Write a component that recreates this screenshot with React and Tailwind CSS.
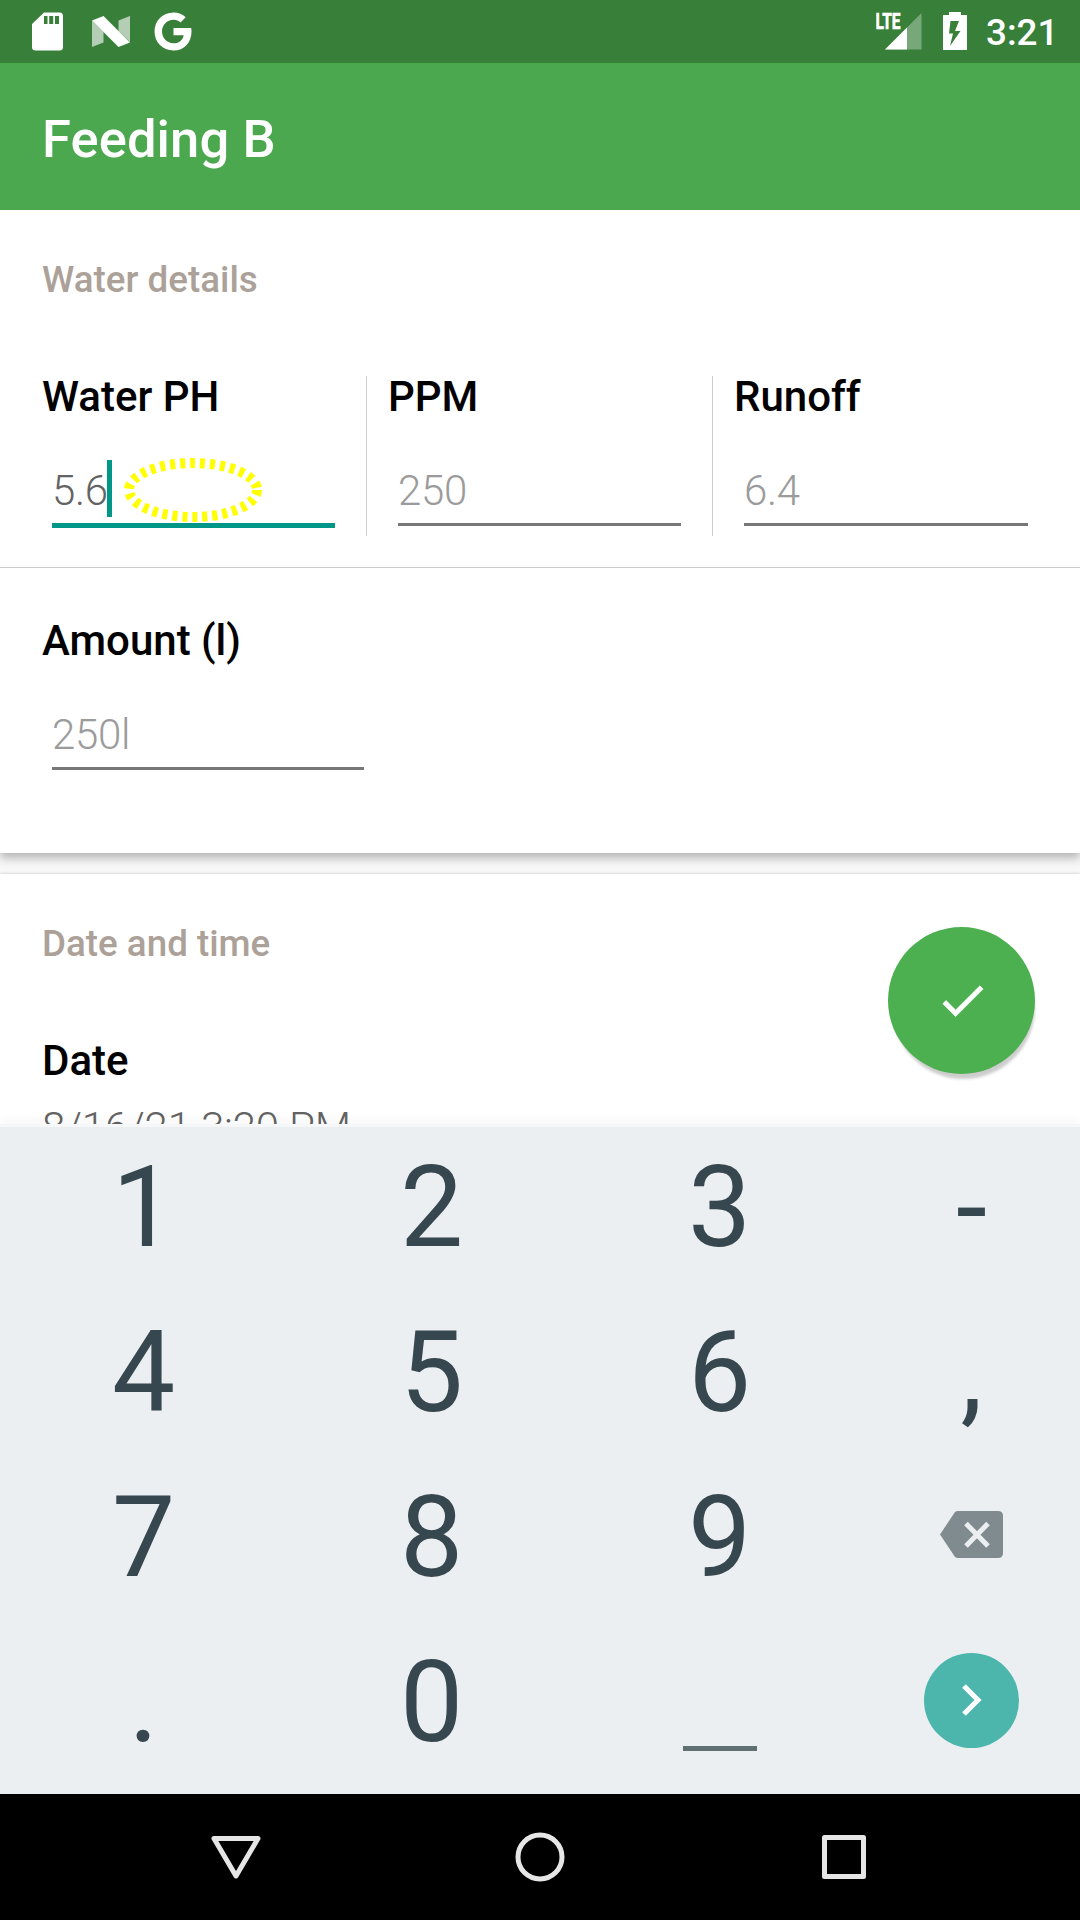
const keyClass = "flex h-[165px] items-center justify-center pb-[3px] text-[112.500px] leading-none text-[#37474f]";
const iconKeyClass = "flex h-[165px] items-center justify-center pb-[9px]";

function StatusBar() {
  return (
    <header className="flex h-[63px] shrink-0 items-center justify-between bg-[#387f3a] text-white">
      <div className="flex h-full items-center">
        <svg className="ml-8 h-[63px] w-[31px]" viewBox="0 0 31 63" fill="currentColor">
          <path fillRule="evenodd" d="M12 12.5H27.5Q31 12.5 31 16V47Q31 50.500 27.500 50.500H3.500Q0 50.500 0 47V24Z M12 16V24H15.500V16Z M17.200 16V24H21.200V16Z M23 16V24H27V16Z" />
        </svg>
        <svg className="ml-[28.500px] h-[63px] w-[38px]" viewBox="0 0 38 63" fill="currentColor">
          <path opacity=".62" d="M0 20.500L11.500 32V42.500L0 47Z M38 16V42L26.500 31V20.500Z" />
          <path d="M0 20.500L11.500 16L38 42.500L26.500 47Z" />
        </svg>
        <svg className="ml-[24.500px] h-[63px] w-[39px]" viewBox="0 0 39 63" fill="currentColor">
          <path d="M19.500 28H37.200Q37.500 30 37.500 31.500C37.500 43 30 50.500 19.500 50.500C8.500 50.500 0.500 42 0.500 31.500C0.500 21 8.500 12.500 19.500 12.500C24.500 12.500 28.500 14.300 31.700 17.300L26.500 22.500C24.800 20.900 22.500 19.800 19.500 19.800C13 19.800 8 25 8 31.500C8 38 13 43.300 19.500 43.300C25.500 43.300 28.800 39.800 29.700 35.200H19.500Z" />
        </svg>
      </div>
      <div className="flex h-full items-center">
        <svg className="h-[63px] w-[46px]" viewBox="0 0 46 63" fill="currentColor">
          <path opacity=".32" d="M9 49.500L45.500 13V49.500Z" />
          <path d="M9 49.500L31 27.500V49.500Z" />
          <text x="-0.500" y="29.300" textLength="25" lengthAdjust="spacingAndGlyphs" stroke="currentColor" strokeWidth=".7" className="text-[22.500px] font-bold">LTE</text>
        </svg>
        <svg className="ml-[21px] h-[63px] w-6" viewBox="0 0 24 63" fill="currentColor">
          <path fillRule="evenodd" d="M6 12H18V15H24V50H0V15H6Z M7.500 21L6 33.500H10L7 46L17.500 31H12L16 21Z" />
        </svg>
        <span className="ml-[19px] mr-[25px] w-[69px] whitespace-nowrap pt-[2px] text-[36.750px] font-medium leading-[63px]">3:21</span>
      </div>
    </header>
  );
}

function Field({ label, hint, width }) {
  return (
    <div>
      <h3 className="text-[42px] font-medium leading-[49px] text-black">{label}</h3>
      <div className={`ml-[10px] mt-[39px] h-[57px] ${width}`}>
        <p className="text-[42px] font-light leading-[62px] tracking-[-0.300px] text-[#9b9b9b]">{hint}</p>
      </div>
      <div className={`ml-[10px] mt-[6px] h-[2.500px] bg-[#777] ${width}`} />
    </div>
  );
}

export default function App() {
  return (
    <div className="relative flex h-[1920px] w-[1080px] flex-col overflow-hidden bg-[#f7f7f7] font-['Roboto',sans-serif]">
      <StatusBar />
      <div className="flex h-[147px] shrink-0 items-center bg-[#4ba84e] pl-[42px] pt-[5px] text-[52.500px] font-medium tracking-[0.100px] text-white">Feeding B</div>

      <main className="h-[914px] shrink-0 overflow-hidden">
        <section className="h-[643px] bg-white shadow-[0_5px_9px_rgba(0,0,0,0.27)]">
          <h2 className="pl-[42px] pt-[48px] text-[36.750px] font-medium leading-[43px] text-[#aca199]">Water details</h2>
          <div className="mt-[75px] flex h-[160px]">
            <div className="w-[366px] pl-[42px]">
              <h3 className="-mt-1 text-[42px] font-medium leading-[49px] text-black">Water PH</h3>
              <div className="ml-[10px] mt-[39px] flex h-[57px] w-[283px] items-start">
                <span className="text-[42px] font-light leading-[62px] tracking-[-0.300px] text-[#636363]">5.6</span>
                <span className="-ml-px h-[57px] w-[5px] bg-[#009688]" />
                <svg className="-mt-[3px] ml-[11px] h-[66px] w-[140px] shrink-0" viewBox="0 0 140 66" fill="none">
                  <ellipse cx="70" cy="33" rx="64" ry="27" stroke="#ff0" strokeWidth="10" strokeDasharray="5 5" />
                </svg>
              </div>
              <div className="ml-[10px] mt-[6px] h-[5px] w-[283px] bg-[#009688]" />
            </div>
            <div className="w-[346px] border-l border-[#ccc] pl-[21px]">
              <div className="-mt-1"><Field label="PPM" hint="250" width="w-[283px]" /></div>
            </div>
            <div className="border-l border-[#ccc] pl-[21px]">
              <div className="-mt-1"><Field label="Runoff" hint="6.4" width="w-[284px]" /></div>
            </div>
          </div>
          <div className="mt-[31px] h-px bg-[#ccc]" />
          <div className="pl-[42px] pt-[48px]"><Field label="Amount (l)" hint="250l" width="w-[312px]" /></div>
        </section>
        <section className="mt-[21px] h-[300px] bg-white pl-[42px] pt-[48px] shadow-[0_0_3px_rgba(0,0,0,0.2)]">
          <h2 className="text-[36.750px] font-medium leading-[43px] text-[#aca199]">Date and time</h2>
          <h3 className="mt-[71px] text-[42px] font-medium leading-[49px] text-black">Date</h3>
          <p className="mt-[18px] text-[42px] font-light leading-[49px] tracking-[-0.150px] text-[#636363]">8/16/21 3:20 PM</p>
        </section>
      </main>
      <button aria-label="Save" className="absolute left-[888px] top-[927px] flex h-[147px] w-[147px] items-center justify-center rounded-full bg-[#4caf50] pl-[2px] shadow-[2px_7px_3px_-2px_rgba(0,0,0,0.2)]">
        <svg className="h-[55px] w-[55px]" viewBox="0 0 24 24" fill="#fff"><path d="M9 16.170L4.830 12l-1.420 1.410L9 19 21 7l-1.410-1.410z" stroke="#fff" strokeWidth=".3" /></svg>
      </button>
      <div className="z-10 h-[3px] shrink-0 bg-[#f5f7f8] shadow-[0_-3px_8px_rgba(0,0,0,0.08)]" />

      <div className="z-10 grid h-[667px] shrink-0 auto-rows-[165px] grid-cols-[287px_289px_287px_217px] content-start bg-[#ebeff2]">
        {["1", "2", "3", "-", "4", "5", "6", ",", "7", "8", "9"].map((k) => (
          <button key={k} className={keyClass}>{k}</button>
        ))}
        <button aria-label="Delete" className={iconKeyClass}>
          <svg className="h-12 w-[63px]" viewBox="0 0 63 48">
            <path d="M15 1Q16.500 0 18 0H58Q63 0 63 5V42Q63 47 58 47H18Q16.500 47 15 46L0 23.500Z" fill="#808b8f" />
            <path d="M26 12.500L48 35M48 12.500L26 35" stroke="#ebeff2" strokeWidth="5" />
          </svg>
        </button>
        <button className={keyClass}>.</button>
        <button className={keyClass}>0</button>
        <button aria-label="Space" className="flex h-[165px] items-end justify-center pb-[36px]">
          <span className="h-[5px] w-[74px] bg-[#5f6f73]" />
        </button>
        <button aria-label="Next" className={iconKeyClass}>
          <span className="flex h-[95px] w-[95px] items-center justify-center rounded-full bg-[#4db6ac]">
            <svg className="h-8 w-5" viewBox="0 0 20 32" fill="none"><path d="M2 2L16 16L2 30" stroke="#fff" strokeWidth="5" /></svg>
          </span>
        </button>
      </div>

      <nav className="flex h-[126px] shrink-0 items-center bg-black">
        <svg className="ml-[210px] h-[63px] w-[52px]" viewBox="0 0 52 63" fill="none" stroke="#e6e6e6" strokeWidth="5" strokeLinejoin="round"><path d="M4 12.500H48L26 50Z" /></svg>
        <svg className="ml-[252px] h-[52px] w-[52px]" viewBox="0 0 52 52" fill="none" stroke="#e6e6e6" strokeWidth="5"><circle cx="26" cy="26" r="22" /></svg>
        <svg className="ml-[252px] h-[52px] w-[52px]" viewBox="0 0 52 52" fill="none" stroke="#e6e6e6" strokeWidth="5" strokeLinejoin="round"><path d="M6.500 6.500H45.500V45.500H6.500Z" /></svg>
      </nav>
    </div>
  );
}
